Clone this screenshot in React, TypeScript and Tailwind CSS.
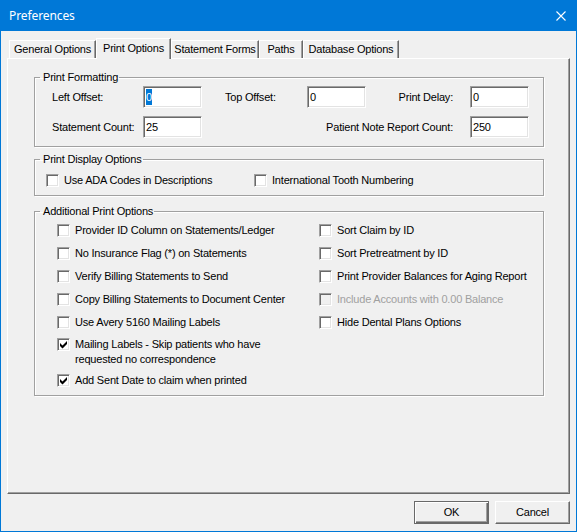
import React from "react";

const sunken =
  "border border-t-[#a0a0a0] border-l-[#a0a0a0] border-r-white border-b-white shadow-[inset_1px_1px_0_#696969,inset_-1px_-1px_0_#e3e3e3]";

const tabs = [
  { label: "General Options", w: "w-[87px]" },
  { label: "Print Options", w: "w-[75px]", active: true },
  { label: "Statement Forms", w: "w-[88px]" },
  { label: "Paths", w: "w-[44px]" },
  { label: "Database Options", w: "w-[96px]" },
];

function Check({ checked, disabled }: { checked?: boolean; disabled?: boolean }) {
  return (
    <span
      className={`relative inline-block h-[13px] w-[13px] shrink-0 ${sunken} ${
        disabled ? "bg-[#f0f0f0]" : "bg-white"
      }`}
    >
      {checked ? (
        <svg className="absolute left-0 top-0" width="11" height="11" viewBox="0 0 11 11">
          <polygon points="2,4 4.5,6.5 9,2 9,5 4.5,9.5 2,7" fill="#000" />
        </svg>
      ) : null}
    </span>
  );
}

function Opt({
  label,
  checked,
  disabled,
}: {
  label: string;
  checked?: boolean;
  disabled?: boolean;
}) {
  return (
    <div className="flex h-[23px] items-center gap-[5px]">
      <Check checked={checked} disabled={disabled} />
      <span className={disabled ? "text-[#a0a0a0]" : ""}>{label}</span>
    </div>
  );
}

function Field({ value, selected }: { value: string; selected?: boolean }) {
  return (
    <div className={`flex h-[22px] w-[59px] items-center bg-white pl-[2px] ${sunken}`}>
      {selected ? <span className="bg-[#0078d7] text-white">{value}</span> : value}
    </div>
  );
}

function Group({
  title,
  className,
  children,
}: {
  title: string;
  className?: string;
  children: React.ReactNode;
}) {
  return (
    <fieldset
      className={`ml-[26px] w-[510px] border border-[#a0a0a0] shadow-[1px_1px_0_#fff,inset_1px_1px_0_#fff] ${className ?? ""}`}
    >
      <legend className="ml-[5px] pl-[3px] pr-[1px] leading-[13px]">{title}</legend>
      {children}
    </fieldset>
  );
}

export default function App() {
  return (
    <div className="flex h-[532px] w-[577px] flex-col border-x border-b border-[#0078d7] bg-[#f0f0f0] font-['Liberation_Sans',Arial,sans-serif] text-[11px] tracking-[-0.2px] text-black">
      <div className="flex h-[31px] shrink-0 items-center justify-between bg-[#0078d7] pl-[8px] pr-[10px]">
        <span className="font-['Noto_Sans',sans-serif] text-[12px] tracking-[-0.1px] text-white">
          Preferences
        </span>
        <svg width="10" height="10" viewBox="0 0 10 10">
          <path d="M0.5 0.5 L9.5 9.5 M9.5 0.5 L0.5 9.5" stroke="#fff" strokeWidth="1.1" />
        </svg>
      </div>

      <div className="flex h-[27px] items-end pl-[8px]">
        {tabs.map((t) =>
          t.active ? (
            <div
              key={t.label}
              className={`relative z-10 -mb-px flex h-[21px] items-center justify-center border-l border-r border-t border-l-white border-r-[#696969] border-t-white bg-[#f0f0f0] pb-[2px] shadow-[inset_-1px_0_0_#a0a0a0] ${t.w}`}
            >
              {t.label}
            </div>
          ) : (
            <div
              key={t.label}
              className={`flex h-[18px] items-center justify-center border-l border-r border-t border-l-white border-r-[#696969] border-t-white shadow-[inset_-1px_0_0_#a0a0a0] ${t.w}`}
            >
              {t.label}
            </div>
          )
        )}
      </div>

      <div className="mx-[6px] flex h-[436px] flex-col border border-b-[#696969] border-l-white border-r-[#696969] border-t-white shadow-[inset_-1px_-1px_0_#a0a0a0]">
        <Group title="Print Formatting" className="mt-[12px] pb-[8px] pt-[2px]">
          <div className="flex h-[22px] items-center pl-[17px]">
            <span className="w-[91px]">Left Offset:</span>
            <Field value="0" selected />
            <span className="ml-[23px] w-[82px]">Top Offset:</span>
            <Field value="0" />
            <span className="w-[104px] pr-[17px] text-right">Print Delay:</span>
            <Field value="0" />
          </div>
          <div className="mt-[8px] flex h-[22px] items-center pl-[17px]">
            <span className="w-[91px]">Statement Count:</span>
            <Field value="25" />
            <span className="w-[268px] pr-[17px] text-right">Patient Note Report Count:</span>
            <Field value="250" />
          </div>
        </Group>

        <Group title="Print Display Options" className="mt-[6px] pb-[7px] pt-[7px]">
          <div className="flex h-[15px] items-center pl-[11px]">
            <div className="flex w-[208px] items-center gap-[5px]">
              <Check />
              <span>Use ADA Codes in Descriptions</span>
            </div>
            <div className="flex items-center gap-[5px]">
              <Check />
              <span>International Tooth Numbering</span>
            </div>
          </div>
        </Group>

        <Group title="Additional Print Options" className="mt-[9px] pb-[3px] pt-[1px]">
          <div className="flex pl-[22px]">
            <div className="flex w-[262px] flex-col">
              <Opt label="Provider ID Column on Statements/Ledger" />
              <Opt label="No Insurance Flag (*) on Statements" />
              <Opt label="Verify Billing Statements to Send" />
              <Opt label="Copy Billing Statements to Document Center" />
              <Opt label="Use Avery 5160 Mailing Labels" />
              <div className="flex h-[35px] items-start gap-[5px]">
                <span className="mt-[4px]">
                  <Check checked />
                </span>
                <span className="pt-[3px] leading-[15px]">
                  Mailing Labels - Skip patients who have
                  <br />
                  requested no correspondence
                </span>
              </div>
              <Opt label="Add Sent Date to claim when printed" checked />
            </div>
            <div className="flex flex-col">
              <Opt label="Sort Claim by ID" />
              <Opt label="Sort Pretreatment by ID" />
              <Opt label="Print Provider Balances for Aging Report" />
              <Opt label="Include Accounts with 0.00 Balance" disabled />
              <Opt label="Hide Dental Plans Options" />
            </div>
          </div>
        </Group>
      </div>

      <div className="mt-[7px] flex justify-end gap-[6px] pr-[6px]">
        <button className="h-[23px] w-[75px] border border-[#696969] bg-[#f0f0f0] shadow-[inset_1px_1px_0_#fff,inset_-1px_-1px_0_#696969,inset_-2px_-2px_0_#a0a0a0]">
          OK
        </button>
        <button className="h-[23px] w-[75px] border border-b-[#696969] border-l-white border-r-[#696969] border-t-white bg-[#f0f0f0] shadow-[inset_-1px_-1px_0_#a0a0a0]">
          Cancel
        </button>
      </div>
    </div>
  );
}
